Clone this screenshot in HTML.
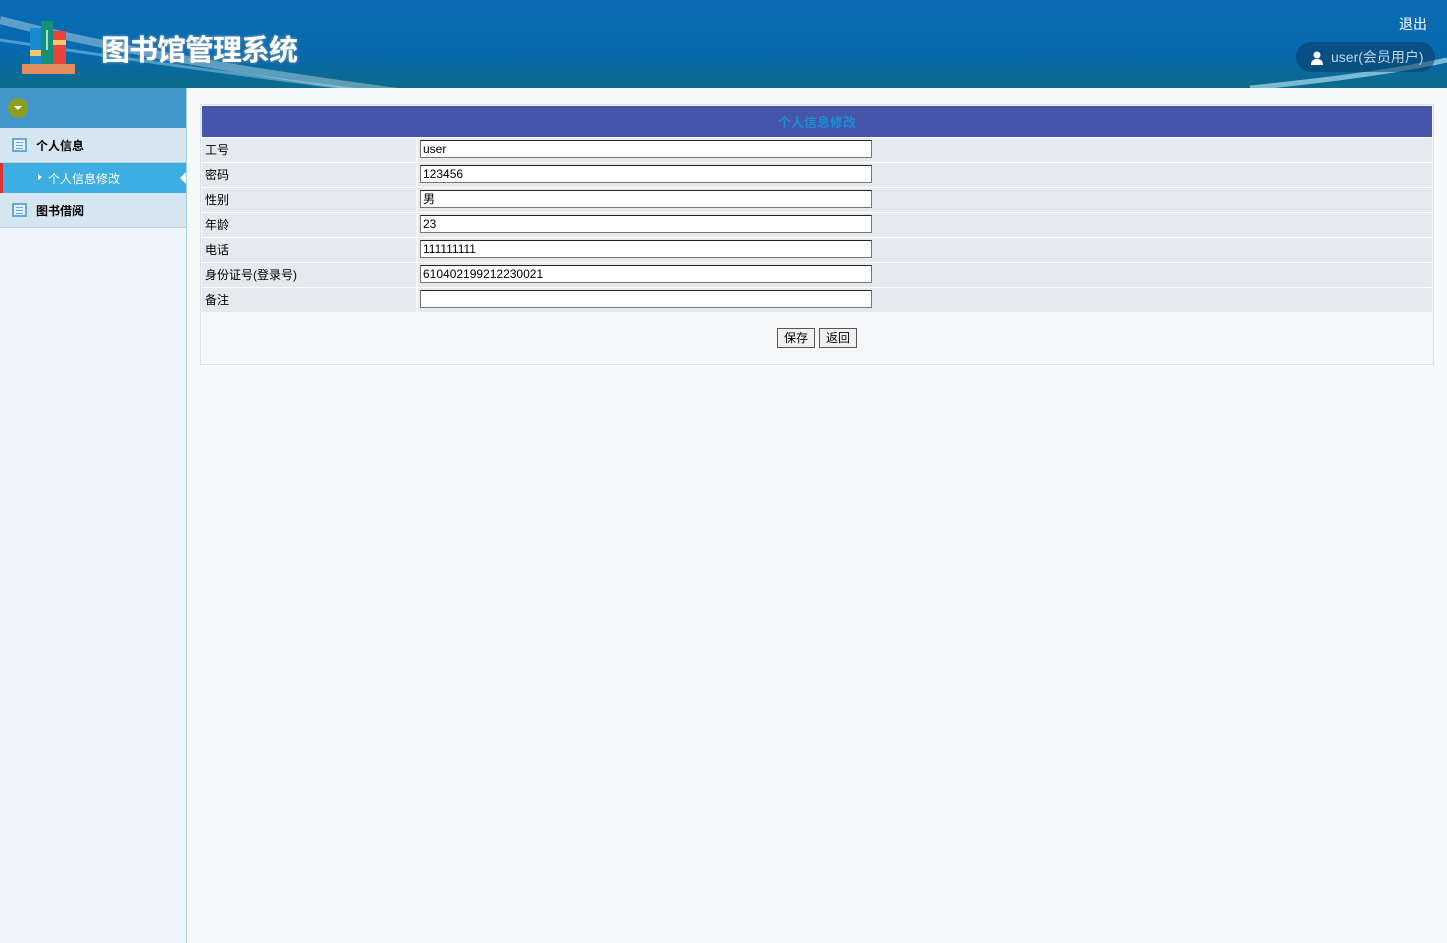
<!DOCTYPE html>
<html><head><meta charset="utf-8"><style>
*{margin:0;padding:0;box-sizing:border-box}
body{width:1447px;height:943px;overflow:hidden;font-family:"Liberation Sans","Noto Sans CJK SC",sans-serif;font-size:12px;background:#f8f9fa;position:relative}
#hd{position:absolute;left:0;top:0;width:1447px;height:88px;background:linear-gradient(180deg,#0a6db4 0%,#0669ad 60%,#0c6a8a 100%);overflow:hidden}
#side{position:absolute;left:0;top:88px;width:187px;height:855px;background:#eef6fc;border-right:1px solid #a9cde6}
.t{position:absolute;color:#000}
.r{display:flex;height:25px;border-top:1px solid #fff}
.l{width:214px;background:#e6e9ee;padding:3px 3px}
.v{flex:1;background:#e6e9ee;margin-left:2px;padding-top:2px}
.i{margin-left:2px;width:452px;height:18px;border:1px solid #777;border-top-color:#222;background:#fff;padding:0 2px;line-height:16px}
.ic{position:absolute;left:12px;width:15px;height:14px;border:2px solid #6aa8d4;background:#e6f1f9}
.ic:after{content:"";position:absolute;left:2px;top:2px;width:7px;height:1px;background:#6aa8d4;box-shadow:0 3px 0 #6aa8d4,0 6px 0 #6aa8d4}
</style></head><body>
<div id="hd">
<svg width="1447" height="88" style="position:absolute;left:0;top:0">
<path d="M0 20 Q150 60 420 95" stroke="rgba(255,255,255,0.35)" stroke-width="8" fill="none"/>
<path d="M0 40 Q200 70 360 90" stroke="rgba(180,230,255,0.4)" stroke-width="3" fill="none"/>
<path d="M1250 88 Q1380 75 1447 60" stroke="rgba(200,240,255,0.6)" stroke-width="5" fill="none"/>
<rect x="22" y="64" width="53" height="10" fill="#e38b5c"/>
<rect x="30" y="28" width="11" height="36" fill="#1a8ad0"/>
<rect x="30" y="50" width="11" height="6" fill="#f6c56d"/>
<rect x="41" y="21" width="12" height="43" fill="#13917a"/>
<rect x="46" y="30" width="2" height="20" fill="#9fe0cc"/>
<rect x="53" y="31" width="13" height="33" fill="#e8433d"/>
<rect x="53" y="40" width="13" height="5" fill="#f6c56d"/>
</svg>
<div class="t" style="left:101px;top:27px;font-size:29px;font-weight:bold;color:#fff;letter-spacing:-1px;text-shadow:0 0 3px #9ab">图书馆管理系统</div>
<div class="t" style="left:1399px;top:14px;font-size:14px;color:#fff">退出</div>
<div style="position:absolute;left:1296px;top:42px;width:139px;height:30px;border-radius:15px;background:rgba(10,60,100,0.55)"></div>
<svg style="position:absolute;left:1310px;top:51px" width="14" height="14"><circle cx="7" cy="4" r="3.5" fill="#fff"/><path d="M1 14 Q1 8 7 8 Q13 8 13 14Z" fill="#fff"/></svg>
<div class="t" style="left:1331px;top:47px;font-size:14px;color:#b9d6ea">user(会员用户)</div>
</div>
<div id="side">
<div style="height:40px;background:#4196cc;position:relative"><div style="position:absolute;left:8px;top:10px;width:20px;height:20px;border-radius:10px;background:#8a9f1e"></div><div style="position:absolute;left:14px;top:18px;border-left:4px solid transparent;border-right:4px solid transparent;border-top:4px solid #fff"></div></div>
<div style="height:35px;background:#d5e6f1;border-bottom:1px solid #b8d2e3;position:relative"><div class="ic" style="top:10px"></div><div class="t" style="left:36px;top:9px;font-weight:bold">个人信息</div></div>
<div style="height:30px;background:#3daee2;border-left:3px solid #e03030;position:relative"><div style="position:absolute;left:35px;top:11px;border-top:3px solid transparent;border-bottom:3px solid transparent;border-left:4px solid #fff"></div><div class="t" style="left:45px;top:7px;color:#fff">个人信息修改</div><div style="position:absolute;right:0;top:9px;border-top:6px solid transparent;border-bottom:6px solid transparent;border-right:6px solid #fff"></div></div>
<div style="height:35px;background:#d5e6f1;border-bottom:1px solid #b8d2e3;position:relative"><div class="ic" style="top:10px"></div><div class="t" style="left:36px;top:9px;font-weight:bold">图书借阅</div></div>
</div>
<div style="position:absolute;left:200px;top:104px;width:1234px;height:261px;border:1px solid #d4e3ee;background:#f5f6f8">
<div style="position:absolute;left:1px;top:1px;width:1230px;height:32px;background:#4655a9;text-align:center;line-height:33px;color:#1a8ed0;font-weight:bold;font-size:13px">个人信息修改</div>
<div style="position:absolute;left:1px;top:32px;width:1230px">
<div class="r"><div class="l">工号</div><div class="v"><div class="i">user</div></div></div>
<div class="r"><div class="l">密码</div><div class="v"><div class="i">123456</div></div></div>
<div class="r"><div class="l">性别</div><div class="v"><div class="i">男</div></div></div>
<div class="r"><div class="l">年龄</div><div class="v"><div class="i">23</div></div></div>
<div class="r"><div class="l">电话</div><div class="v"><div class="i">111111111</div></div></div>
<div class="r"><div class="l">身份证号(登录号)</div><div class="v"><div class="i">610402199212230021</div></div></div>
<div class="r"><div class="l">备注</div><div class="v"><div class="i"></div></div></div>
</div>
<div style="position:absolute;left:576px;top:223px;width:38px;height:20px;border:1px solid #555;background:#f0f0f0;text-align:center;line-height:18px">保存</div>
<div style="position:absolute;left:618px;top:223px;width:38px;height:20px;border:1px solid #555;background:#f0f0f0;text-align:center;line-height:18px">返回</div>
</div>
</body></html>
